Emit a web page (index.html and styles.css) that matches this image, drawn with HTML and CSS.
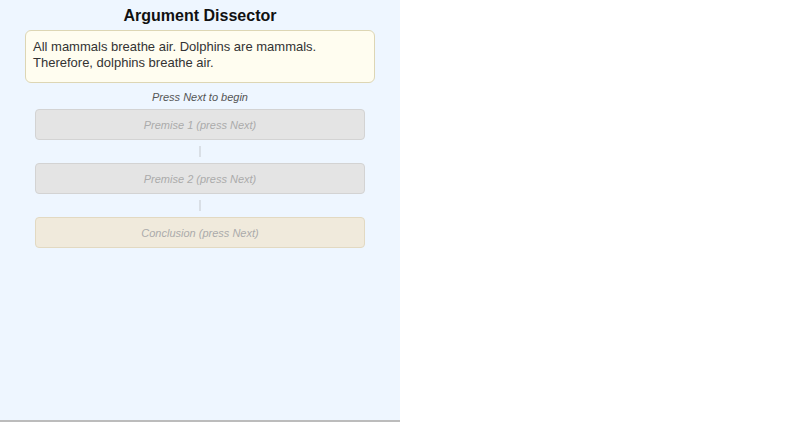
FILE: index.html
```html
<!DOCTYPE html>
<html>
<head>
<meta charset="utf-8">
<link rel="stylesheet" href="styles.css">
</head>
<body>
<div class="panel">
  <h1 class="title">Argument Dissector</h1>
  <div class="argument">All mammals breathe air. Dolphins are mammals. Therefore, dolphins breathe air.</div>
  <div class="hint">Press Next to begin</div>
  <div class="chain">
    <div class="step premise">Premise 1 (press Next)</div>
    <div class="link"></div>
    <div class="step premise">Premise 2 (press Next)</div>
    <div class="link"></div>
    <div class="step conclusion">Conclusion (press Next)</div>
  </div>
</div>
</body>
</html>
```

FILE: styles.css
```css
html, body {
  margin: 0;
  padding: 0;
  background: #ffffff;
  font-family: "Liberation Sans", Arial, sans-serif;
}

.panel {
  width: 400px;
  height: 414px;
  padding-top: 6px;
  background: #eef6ff;
  border-bottom: 2px solid #bcbcbc;
  display: flex;
  flex-direction: column;
}

.title {
  margin: 0;
  font-size: 16px;
  line-height: 20px;
  font-weight: bold;
  text-align: center;
  color: #111;
}

.argument {
  margin: 4px 25px 0;
  background: #fffdf0;
  border: 1px solid #ddd6b4;
  border-radius: 6px;
  padding: 8px 7px 11px;
  font-size: 13px;
  line-height: 16px;
  color: #333;
}

.hint {
  margin-top: 7px;
  font-size: 11px;
  line-height: 14px;
  font-style: italic;
  color: #555;
  text-align: center;
}

.chain {
  margin: 5px 35px 0;
  display: flex;
  flex-direction: column;
  align-items: center;
}

.step {
  align-self: stretch;
  height: 29px;
  border-radius: 4px;
  font-size: 11px;
  font-style: italic;
  color: #ababab;
  display: flex;
  align-items: center;
  justify-content: center;
}

.premise {
  background: #e4e4e4;
  border: 1px solid #d3d3d3;
}

.conclusion {
  background: #f0eadc;
  border: 1px solid #e2d9c2;
}

.link {
  width: 2px;
  height: 11px;
  margin: 6px 0;
  background: #d9dfe6;
}
```
